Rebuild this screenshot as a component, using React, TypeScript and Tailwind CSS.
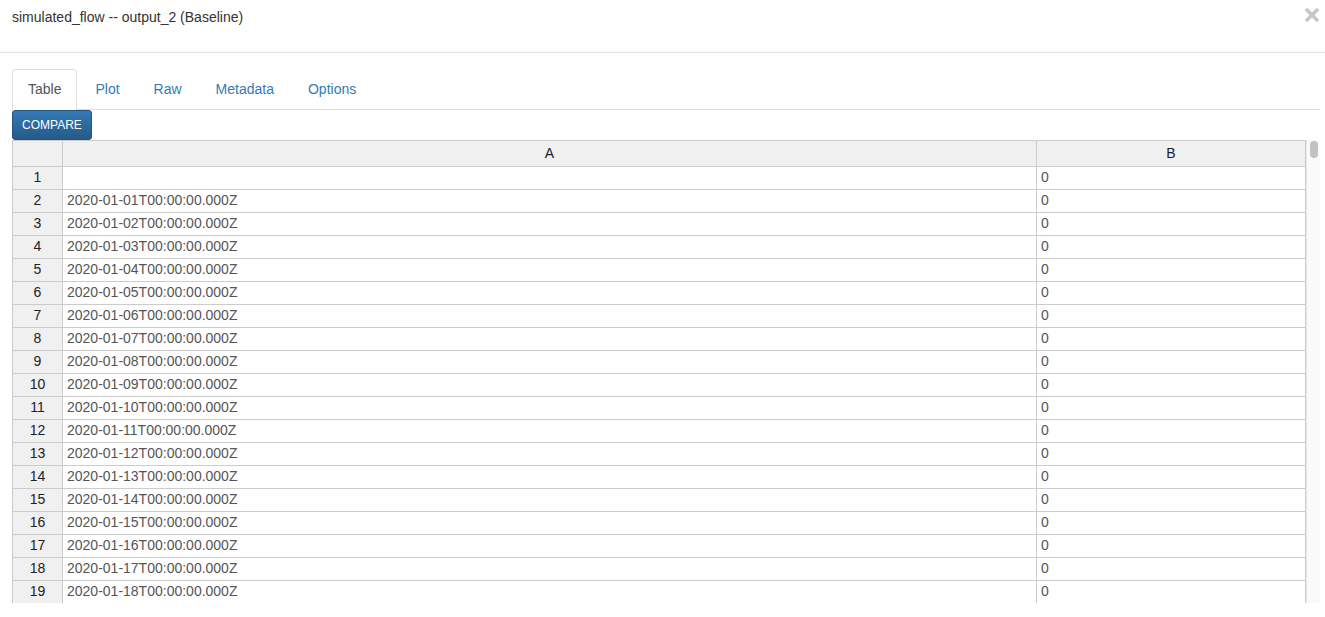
import React from "react";

const rows = Array.from({ length: 19 }, (_, i) => {
  if (i === 0) return { n: 1, a: "", b: "0" };
  const d = String(i).padStart(2, "0");
  return { n: i + 1, a: `2020-01-${d}T00:00:00.000Z`, b: "0" };
});

export default function App() {
  return (
    <div
      className="w-[1325px] h-[617px] bg-white overflow-hidden text-[#333]"
      style={{ fontFamily: '"Liberation Sans", Arial, sans-serif' }}
    >
      <div className="h-[53px] border-b border-[#e5e5e5] flex items-start justify-between pl-[12px] pr-[5px]">
        <div className="text-[14px] leading-[18px] mt-[8px]">simulated_flow -- output_2 (Baseline)</div>
        <svg width="16" height="16" viewBox="0 0 16 16" className="mt-[7px]">
          <path d="M2 2 L14 14 M14 2 L2 14" stroke="#c6c6c6" strokeWidth="3.4" strokeLinecap="butt" />
        </svg>
      </div>
      <div className="pt-[16px] pl-[12px] pr-[5px]">
        <div className="flex border-b border-[#ddd] h-[41px] text-[14px] leading-[20px]">
          <div className="px-[15px] pt-[9px] border border-[#ddd] border-b-white rounded-t-[4px] bg-white text-[#555] h-[42px] mr-[2px]">
            Table
          </div>
          <div className="px-[16px] py-[10px] text-[#337ab7] mr-[2px]">Plot</div>
          <div className="px-[16px] py-[10px] text-[#337ab7] mr-[2px]">Raw</div>
          <div className="px-[16px] py-[10px] text-[#337ab7] mr-[2px]">Metadata</div>
          <div className="px-[16px] py-[10px] text-[#337ab7]">Options</div>
        </div>
        <div className="flex">
          <button className="h-[30px] w-[80px] rounded-[3px] text-white text-[12px] border border-[#245580] bg-gradient-to-b from-[#337ab7] to-[#265a88]">
            COMPARE
          </button>
        </div>
        <div className="flex h-[463px] overflow-hidden">
          <table className="border-collapse w-[1293px] table-fixed text-[14px]">
            <colgroup>
              <col className="w-[50px]" />
              <col className="w-[974px]" />
              <col className="w-[269px]" />
            </colgroup>
            <thead>
              <tr className="h-[26px] bg-[#f0f0f0] text-[#222]">
                <th className="border border-[#ccc] font-normal"></th>
                <th className="border border-[#ccc] font-normal">A</th>
                <th className="border border-[#ccc] font-normal">B</th>
              </tr>
            </thead>
            <tbody>
              {rows.map((r) => (
                <tr key={r.n} className="h-[23px]">
                  <td className="border border-[#ccc] bg-[#f0f0f0] text-center text-[#222] p-0 pb-[1px] leading-[21px]">{r.n}</td>
                  <td className="border border-[#ccc] text-[#555] leading-[21px] p-0 pl-[4px] pb-[1px]">{r.a}</td>
                  <td className="border border-[#ccc] text-[#555] leading-[21px] p-0 pl-[4px] pb-[1px]">{r.b}</td>
                </tr>
              ))}
            </tbody>
          </table>
          <div className="w-[15px] bg-[#fafafa] border-l border-[#e8e8e8] flex justify-center pt-[1px]">
            <div className="w-[8px] h-[17px] rounded-[4px] bg-[#c2c2c2]" />
          </div>
        </div>
      </div>
    </div>
  );
}
